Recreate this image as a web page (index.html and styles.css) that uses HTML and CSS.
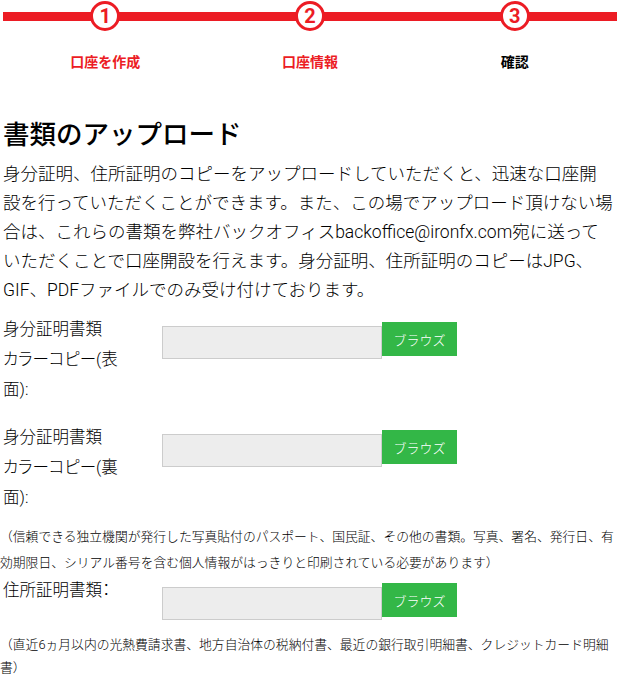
FILE: index.html
```html
<!DOCTYPE html>
<html lang="ja">
<head>
    <meta charset="UTF-8">
    <meta name="viewport" content="width=device-width, initial-scale=1.0">
    <title>書類のアップロード</title>
    <link rel="stylesheet" href="styles.css">
</head>
<body>
    <div class="steps">
        <div class="step-track">
            <div class="step"><span class="step-num">1</span></div>
            <div class="step"><span class="step-num">2</span></div>
            <div class="step"><span class="step-num">3</span></div>
        </div>
        <div class="step-labels">
            <div class="step-label done">口座を作成</div>
            <div class="step-label done">口座情報</div>
            <div class="step-label">確認</div>
        </div>
    </div>

    <div class="upload-section">
        <h2 class="upload-title">書類のアップロード</h2>
        <p class="upload-intro">
            身分証明、住所証明のコピーをアップロードしていただくと、迅速な口座開<br>設を行っていただくことができます。また、この場でアップロード頂けない場<br>合は、これらの書類を弊社バックオフィスbackoffice@ironfx.com宛に送って<br>いただくことで口座開設を行えます。身分証明、住所証明のコピーはJPG、<br>GIF、PDFファイルでのみ受け付けております。
        </p>

        <div class="upload-row spaced">
            <label class="upload-label">身分証明書類<br>カラーコピー(表面):</label>
            <div class="file-field">
                <input type="text" class="file-input" readonly>
                <button type="button" class="browse-btn">ブラウズ</button>
            </div>
        </div>

        <div class="upload-row">
            <label class="upload-label">身分証明書類<br>カラーコピー(裏面):</label>
            <div class="file-field">
                <input type="text" class="file-input" readonly>
                <button type="button" class="browse-btn">ブラウズ</button>
            </div>
        </div>

        <p class="upload-note">（信頼できる独立機関が発行した写真貼付のパスポート、国民証、その他の書類。写真、署名、発行日、有効期限日、シリアル番号を含む個人情報がはっきりと印刷されている必要があります）</p>

        <div class="upload-row">
            <label class="upload-label">住所証明書類：</label>
            <div class="file-field">
                <input type="text" class="file-input" readonly>
                <button type="button" class="browse-btn">ブラウズ</button>
            </div>
        </div>

        <p class="upload-note last">（直近6ヵ月以内の光熱費請求書、地方自治体の税納付書、最近の銀行取引明細書、クレジットカード明細書）</p>
    </div>
</body>
</html>
```

FILE: styles.css
```css
:root {
    --red: #ec1c24;
    --green: #33b747;
}

body {
    font-family: Roboto, "Noto Sans CJK JP", sans-serif;
    color: #000;
    background: #fff;
    margin: 0;
    padding: 0;
}

.steps {
    padding: 1px 3px 0;
}

.step-track {
    display: grid;
    grid-template-columns: repeat(3, 1fr);
    background: linear-gradient(var(--red), var(--red)) center / 100% 9px no-repeat;
}

.step {
    display: flex;
    justify-content: center;
}

.step-num {
    width: 30px;
    height: 30px;
    box-sizing: border-box;
    border: 3px solid var(--red);
    border-radius: 50%;
    background: #fff;
    color: var(--red);
    font-weight: bold;
    font-size: 20px;
    line-height: 24px;
    text-align: center;
}

.step-labels {
    display: grid;
    grid-template-columns: repeat(3, 1fr);
    margin-top: 21px;
}

.step-label {
    text-align: center;
    font-size: 14px;
    font-weight: bold;
    line-height: 20px;
}

.step-label.done {
    color: var(--red);
}

.upload-section {
    padding: 0 3px;
    margin-top: 45px;
}

.upload-title {
    font-size: 26.5px;
    font-weight: 500;
    line-height: 36px;
    margin: 0 0 7px;
}

.upload-intro {
    font-size: 17.5px;
    font-weight: 300;
    line-height: 29px;
    white-space: nowrap;
    margin: 0 0 10px;
}

.upload-row {
    display: flex;
    align-items: flex-start;
    margin-bottom: 11px;
}

.upload-row.spaced {
    margin-bottom: 18px;
}

.upload-label {
    box-sizing: border-box;
    width: 159px;
    padding-right: 34px;
    font-size: 16.5px;
    font-weight: 300;
    line-height: 30px;
    font-feature-settings: "palt";
}

.file-field {
    display: flex;
    align-items: flex-start;
}

.file-input {
    width: 220px;
    height: 33px;
    box-sizing: border-box;
    margin: 11px 0 0;
    border: 1px solid #ccc;
    background: #ededed;
    padding: 0;
}

.browse-btn {
    width: 75px;
    height: 34px;
    margin-top: 7px;
    border: none;
    background: var(--green);
    color: #fff;
    font-family: "Noto Sans CJK JP", sans-serif;
    font-size: 13px;
    font-weight: 300;
    cursor: pointer;
}

.upload-note {
    font-size: 12.8px;
    font-weight: 300;
    line-height: 26px;
    margin: 0 -3px;
}

.upload-note.last {
    line-height: 23px;
    margin-top: 13px;
}
```
